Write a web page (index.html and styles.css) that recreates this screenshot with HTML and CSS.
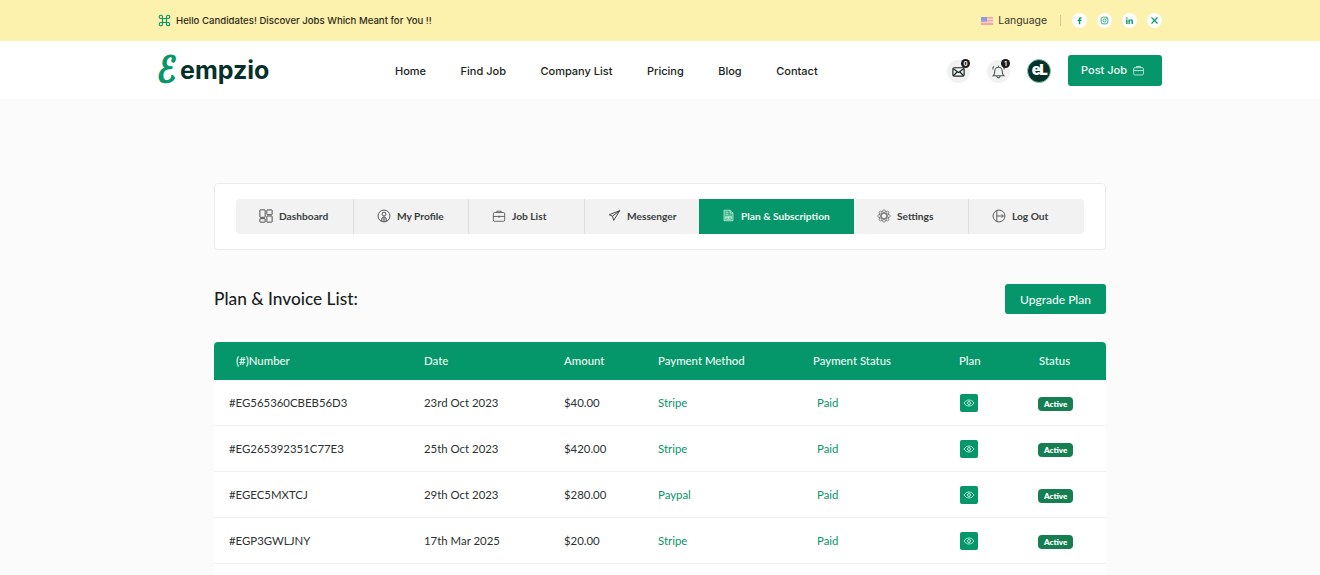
FILE: index.html
```html
<!DOCTYPE html>
<html lang="en">
<head>
  <meta charset="UTF-8">
  <meta name="viewport" content="width=device-width, initial-scale=1.0">
  <title>Plan &amp; Invoice List</title>
  <link rel="stylesheet" href="styles.css">
</head>
<body>
  <div class="topbar">
    <div class="wrap topbar-row">
      <div class="hello">
        <svg class="hello-icon" viewBox="0 0 16 16" fill="none" stroke="#059669" stroke-width="1.4"><path d="M5.5 5.5h5v5h-5zM5.5 5.5H3.7a2 2 0 1 1 1.8-2zM10.5 5.5V3.5a2 2 0 1 1 2 2zM10.5 10.5h2a2 2 0 1 1-2 2zM5.5 10.5v2a2 2 0 1 1-2-2z"/></svg>
        <span>Hello Candidates! Discover Jobs Which Meant for You !!</span>
      </div>
      <div class="top-right">
        <svg class="flag" viewBox="0 0 12 8"><rect width="12" height="8" fill="#f4a5a5"/><rect y="1.6" width="12" height="1.2" fill="#fbe3dc"/><rect y="4.4" width="12" height="1.2" fill="#fbe3dc"/><rect width="6" height="4.6" fill="#8c9fd8"/></svg>
        <span class="lang">Language</span>
        <span class="sep"></span>
        <div class="socials">
          <span class="social"><svg viewBox="0 0 12 12" fill="#059669"><path d="M7 11V6.8h1.5l.3-1.7H7V4.2c0-.6.2-.9.9-.9h.9V1.7C8.5 1.7 8 1.6 7.400 1.600 6 1.600 5.100 2.500 5.100 4v1.100H3.600v1.700h1.500V11z"/></svg></span>
          <span class="social"><svg viewBox="0 0 12 12" fill="none" stroke="#059669" stroke-width="1"><rect x="1.500" y="1.500" width="9" height="9" rx="2.500"/><circle cx="6" cy="6" r="2"/><circle cx="8.500" cy="3.500" r=".3"/></svg></span>
          <span class="social"><svg viewBox="0 0 12 12" fill="#059669"><path d="M1.500 4.500h1.900V10.500H1.500zM2.450 1.500a1.100 1.100 0 1 1 0 2.200 1.100 1.100 0 0 1 0-2.200zM4.600 4.500h1.800v.8c.4-.6 1-1 1.900-1 1.600 0 2.200 1 2.200 2.700v3.500H8.600V7.400c0-.8-.2-1.400-1-1.400-.9 0-1.200.6-1.200 1.400v3.100H4.600z"/></svg></span>
          <span class="social"><svg viewBox="0 0 12 12" fill="none" stroke="#059669" stroke-width="1.500"><path d="M2 2l8 8M10 2l-8 8"/></svg></span>
        </div>
      </div>
    </div>
  </div>

  <header class="navbar">
    <div class="wrap navbar-row">
      <a class="logo"><span class="logo-e">ℰ</span><span class="logo-text">empzio</span></a>
      <nav class="menu">
        <a>Home</a>
        <a>Find Job</a>
        <a>Company List</a>
        <a>Pricing</a>
        <a>Blog</a>
        <a>Contact</a>
      </nav>
      <div class="actions">
        <span class="round">
          <svg viewBox="0 0 16 16" fill="none" stroke="#1f2a28" stroke-width="1.300"><rect x="2" y="4" width="12" height="9" rx="1.500"/><path d="M2.500 5l5.500 4 5.500-4M2.500 12.500l4-4M13.500 12.500l-4-4"/></svg>
          <span class="count">0</span>
        </span>
        <span class="round">
          <svg class="bell" viewBox="0 0 16 16" fill="none" stroke="#4b5553" stroke-width="1"><path d="M3 12c1-1 1.500-2 1.500-4.500a3.500 3.500 0 0 1 7 0c0 2.500.5 3.500 1.500 4.500zM6.500 12.500a1.500 1.500 0 0 0 3 0M8 2.500V3.800M2.500 6a5 5 0 0 1 1.200-2.800M13.500 6a5 5 0 0 0-1.200-2.800"/></svg>
          <span class="count">1</span>
        </span>
        <span class="avatar">eL</span>
        <a class="post-job">Post Job
          <svg viewBox="0 0 16 16" fill="none" stroke="#c9eadd" stroke-width="1.100"><rect x="2" y="4.500" width="12" height="9" rx="1.500"/><path d="M5.500 4.500V3h5v1.500M2 8h12M8 7.500v1.500"/></svg>
        </a>
      </div>
    </div>
  </header>

  <main class="page">
    <div class="tabs-card">
      <div class="tabs">
        <a class="tab">
          <svg viewBox="0 0 16 16" fill="none" stroke="#4a4a4a" stroke-width="1.100"><rect x="1" y="1" width="6" height="8.500" rx=".5"/><rect x="9" y="1" width="6" height="5.500" rx=".5"/><rect x="1" y="11" width="6" height="4" rx=".5"/><rect x="9" y="8" width="6" height="7" rx=".5"/></svg>
          Dashboard
        </a>
        <a class="tab">
          <svg viewBox="0 0 16 16" fill="none" stroke="#555" stroke-width="1.100"><circle cx="8" cy="8" r="6.800"/><circle cx="8" cy="5.800" r="2.200"/><path d="M5 14c0-3 1-5 3-5s3 2 3 5M7 9.500v5M9 9.500v5"/></svg>
          My Profile
        </a>
        <a class="tab">
          <svg viewBox="0 0 16 16" fill="none" stroke="#555" stroke-width="1"><rect x="1.500" y="4" width="13" height="10" rx="1.500"/><path d="M5.500 4V2.500h5V4M1.500 8.500h13M8 7.500v2.500"/></svg>
          Job List
        </a>
        <a class="tab tab-small">
          <svg viewBox="0 0 16 16" fill="none" stroke="#444" stroke-width="1.200"><path d="M14.500 2L1.500 7l4 1.800L7 14zM14.500 2L5.500 8.800"/></svg>
          Messenger
        </a>
        <a class="tab tab-small tab-active">
          <svg viewBox="0 0 16 16" fill="#3fb48d" stroke="#c4ecdd" stroke-width="1"><path d="M2.500 1.500h7.500l3.500 3.500v9.500h-11z"/><path d="M10 1.500V5h3.500M4.500 4h3M4.500 6.500h3M4.500 9h7v3.500h-7zM8 9v3.500M4.500 10.700h7"/></svg>
          Plan &amp; Subscription
        </a>
        <a class="tab">
          <svg viewBox="0 0 16 16" fill="none" stroke="#666" stroke-width=".8"><ellipse cx="8" cy="8" rx="7.200" ry="3"/><ellipse cx="8" cy="8" rx="7.200" ry="3" transform="rotate(45 8 8)"/><ellipse cx="8" cy="8" rx="7.200" ry="3" transform="rotate(90 8 8)"/><ellipse cx="8" cy="8" rx="7.200" ry="3" transform="rotate(135 8 8)"/></svg>
          Settings
        </a>
        <a class="tab">
          <svg viewBox="0 0 16 16" fill="none" stroke="#555" stroke-width="1.100"><circle cx="8" cy="8" r="6.800"/><path d="M5.500 1.800v12.400M5.500 8h7.500M11 6l2 2-2 2"/></svg>
          Log Out
        </a>
      </div>
    </div>

    <div class="list-head">
      <h2>Plan &amp; Invoice List:</h2>
      <a class="upgrade">Upgrade Plan</a>
    </div>

    <table class="plans">
      <colgroup>
        <col class="c-num"><col class="c-date"><col class="c-amount"><col class="c-method"><col class="c-pay"><col class="c-plan"><col class="c-status">
      </colgroup>
      <thead>
        <tr>
          <th>(#)Number</th>
          <th>Date</th>
          <th>Amount</th>
          <th>Payment Method</th>
          <th>Payment Status</th>
          <th>Plan</th>
          <th>Status</th>
        </tr>
      </thead>
      <tbody>
        <tr>
          <td>#EG565360CBEB56D3</td>
          <td>23rd Oct 2023</td>
          <td>$40.00</td>
          <td class="green">Stripe</td>
          <td class="green paid">Paid</td>
          <td><span class="eye"><svg viewBox="0 0 12 12" fill="none" stroke="#bfe8d8" stroke-width="1"><path d="M1 6c1.300-2 3-3 5-3s3.700 1 5 3c-1.300 2-3 3-5 3S2.300 8 1 6z"/><circle cx="6" cy="6" r="1.500"/></svg></span></td>
          <td><span class="badge">Active</span></td>
        </tr>
        <tr>
          <td>#EG265392351C77E3</td>
          <td>25th Oct 2023</td>
          <td>$420.00</td>
          <td class="green">Stripe</td>
          <td class="green paid">Paid</td>
          <td><span class="eye"><svg viewBox="0 0 12 12" fill="none" stroke="#bfe8d8" stroke-width="1"><path d="M1 6c1.300-2 3-3 5-3s3.700 1 5 3c-1.300 2-3 3-5 3S2.300 8 1 6z"/><circle cx="6" cy="6" r="1.500"/></svg></span></td>
          <td><span class="badge">Active</span></td>
        </tr>
        <tr>
          <td>#EGEC5MXTCJ</td>
          <td>29th Oct 2023</td>
          <td>$280.00</td>
          <td class="green">Paypal</td>
          <td class="green paid">Paid</td>
          <td><span class="eye"><svg viewBox="0 0 12 12" fill="none" stroke="#bfe8d8" stroke-width="1"><path d="M1 6c1.300-2 3-3 5-3s3.700 1 5 3c-1.300 2-3 3-5 3S2.300 8 1 6z"/><circle cx="6" cy="6" r="1.500"/></svg></span></td>
          <td><span class="badge">Active</span></td>
        </tr>
        <tr>
          <td>#EGP3GWLJNY</td>
          <td>17th Mar 2025</td>
          <td>$20.00</td>
          <td class="green">Stripe</td>
          <td class="green paid">Paid</td>
          <td><span class="eye"><svg viewBox="0 0 12 12" fill="none" stroke="#bfe8d8" stroke-width="1"><path d="M1 6c1.300-2 3-3 5-3s3.700 1 5 3c-1.300 2-3 3-5 3S2.300 8 1 6z"/><circle cx="6" cy="6" r="1.500"/></svg></span></td>
          <td><span class="badge">Active</span></td>
        </tr>
        <tr class="row-end">
          <td colspan="7"></td>
        </tr>
      </tbody>
    </table>
  </main>
</body>
</html>
```

FILE: styles.css
```css
* {
  box-sizing: border-box;
}

html,
body {
  height: 575px;
  overflow: hidden;
}

body {
  margin: 0;
  font-family: Lato, "Open Sans", sans-serif;
  background-color: #fbfbfb;
  color: #1f2a28;
}

.wrap {
  width: 1004px;
  margin: 0 auto;
}

.topbar {
  height: 41px;
  background-color: #fdf1ae;
}

.topbar-row {
  height: 41px;
  display: flex;
  align-items: center;
  justify-content: space-between;
}

.hello {
  display: flex;
  align-items: center;
  gap: 5px;
  font-family: Inter, sans-serif;
  font-size: 9.6px;
  font-weight: 500;
  color: #2e2a14;
}

.hello-icon {
  width: 13px;
  height: 13px;
}

.top-right {
  display: flex;
  align-items: center;
}

.flag {
  width: 12px;
  height: 8px;
}

.lang {
  margin-left: 5px;
  font-family: Inter, sans-serif;
  font-size: 10.4px;
  color: #33352b;
}

.sep {
  width: 1px;
  height: 11px;
  margin: 0 11px 0 13px;
  background-color: #cfc99a;
}

.socials {
  display: flex;
  gap: 10px;
}

.social {
  width: 15px;
  height: 15px;
  border-radius: 50%;
  background-color: #fff;
  display: flex;
  align-items: center;
  justify-content: center;
}

.social svg {
  width: 9px;
  height: 9px;
}

.navbar {
  height: 58px;
  background-color: #fff;
}

.navbar-row {
  height: 58px;
  display: flex;
  align-items: center;
}

.logo {
  width: 237px;
  display: flex;
  align-items: center;
}

.logo-e {
  display: inline-block;
  width: 21px;
  font-family: "DejaVu Sans", sans-serif;
  font-weight: bold;
  font-size: 36px;
  line-height: 38px;
  color: #059669;
  -webkit-text-stroke: 1.5px #059669;
  transform: scaleX(0.72) skewX(-10deg);
  transform-origin: left center;
}

.logo-text {
  margin-left: 1px;
  font-family: Inter, sans-serif;
  font-weight: 700;
  font-size: 25px;
  color: #06302a;
}

.menu {
  display: flex;
  gap: 34.5px;
  padding-top: 1px;
  font-family: Inter, sans-serif;
  font-size: 11px;
  font-weight: 500;
  color: #1a2321;
}

.actions {
  margin-left: auto;
  display: flex;
  align-items: center;
}

.round {
  position: relative;
  width: 23px;
  height: 23px;
  margin-top: 2px;
  margin-right: 17px;
  border-radius: 50%;
  background-color: #f1f1f1;
  display: flex;
  align-items: center;
  justify-content: center;
}

.round svg {
  width: 15px;
  height: 15px;
}

.round .bell {
  width: 17px;
  height: 17px;
}

.count {
  position: absolute;
  top: -1px;
  right: 0;
  width: 9px;
  height: 9px;
  border-radius: 50%;
  background-color: #1a1a1a;
  color: #fff;
  font-family: Inter, sans-serif;
  font-size: 6px;
  font-weight: 700;
  line-height: 9px;
  text-align: center;
}

.avatar {
  width: 24px;
  height: 24px;
  margin-top: 2px;
  margin-right: 17px;
  border-radius: 50%;
  background-color: #06302a;
  border: 1px solid #7fd0b2;
  color: #fff;
  font-family: Inter, sans-serif;
  font-size: 15px;
  font-weight: 900;
  letter-spacing: -1.500px;
  line-height: 19px;
  text-align: center;
}

.post-job {
  width: 94px;
  height: 31px;
  padding-left: 13px;
  background-color: #059669;
  border-radius: 3px;
  color: #f3fbf8;
  font-family: Inter, sans-serif;
  font-size: 11px;
  font-weight: 500;
  display: flex;
  align-items: center;
  gap: 5px;
}

.post-job svg {
  width: 13px;
  height: 13px;
}

.page {
  width: 892px;
  margin: 0 auto;
  padding-top: 84px;
}

.tabs-card {
  height: 67px;
  background-color: #fff;
  border: 1px solid #ececec;
  border-radius: 4px;
  padding: 15px 21px;
}

.tabs {
  height: 35px;
  display: grid;
  grid-template-columns: 117px 115px 116px 115px 155px 114px 116px;
  background-color: #f2f2f2;
  border-radius: 4px;
  overflow: hidden;
}

.tab {
  display: flex;
  align-items: center;
  gap: 6px;
  padding: 0 0 2px 23px;
  font-size: 10.2px;
  font-weight: 700;
  color: #3a4040;
  border-left: 1px solid #dedede;
}

.tab svg {
  width: 14px;
  height: 14px;
  flex-shrink: 0;
}

.tab-small svg {
  width: 13px;
  height: 13px;
}

.tab:first-child,
.tab-active,
.tab-active + .tab {
  border-left: 0;
}

.tab-active {
  background-color: #059669;
  color: #eefaf5;
}

.list-head {
  height: 30px;
  margin-top: 34px;
  display: flex;
  align-items: center;
  justify-content: space-between;
}

.list-head h2 {
  margin: 0 0 2px;
  font-size: 17.3px;
  font-weight: 500;
  color: #1a1f1e;
}

.upgrade {
  width: 101px;
  height: 30px;
  background-color: #059669;
  border-radius: 3px;
  color: #f3fbf8;
  font-size: 12px;
  font-weight: 500;
  display: flex;
  align-items: center;
  justify-content: center;
}

.plans {
  width: 892px;
  margin-top: 28px;
  table-layout: fixed;
  border-collapse: separate;
  border-spacing: 0;
  background-color: #fff;
  font-size: 11.4px;
}

.c-num { width: 210px; }
.c-date { width: 140px; }
.c-amount { width: 94px; }
.c-method { width: 155px; }
.c-pay { width: 146px; }
.c-plan { width: 80px; }
.c-status { width: 67px; }

.plans th {
  height: 38px;
  padding: 0 0 2px;
  background-color: #059669;
  color: #eefaf5;
  font-weight: 500;
  text-align: left;
}

.plans th:first-child {
  padding-left: 22px;
  border-top-left-radius: 4px;
}

.plans th:last-child {
  border-top-right-radius: 4px;
}

.plans td {
  height: 46px;
  padding: 0;
  color: #2b3231;
  border-bottom: 1px solid #eef3f1;
}

.plans td:first-child {
  padding-left: 15px;
}

.plans .row-end td {
  height: 11px;
  border-bottom: 0;
}

.plans td.green {
  color: #059669;
}

.plans td.paid {
  padding-left: 4px;
}

.eye {
  width: 18px;
  height: 18px;
  margin-left: 1px;
  background-color: #059669;
  border-radius: 2px;
  display: flex;
  align-items: center;
  justify-content: center;
}

.eye svg {
  width: 12px;
  height: 12px;
}

.badge {
  display: inline-block;
  height: 14px;
  margin: 2px 0 0 -1px;
  padding: 0 6px;
  background-color: #157f52;
  border-radius: 4px;
  color: #fff;
  font-size: 8px;
  font-weight: 800;
  line-height: 14px;
  vertical-align: middle;
}
```
